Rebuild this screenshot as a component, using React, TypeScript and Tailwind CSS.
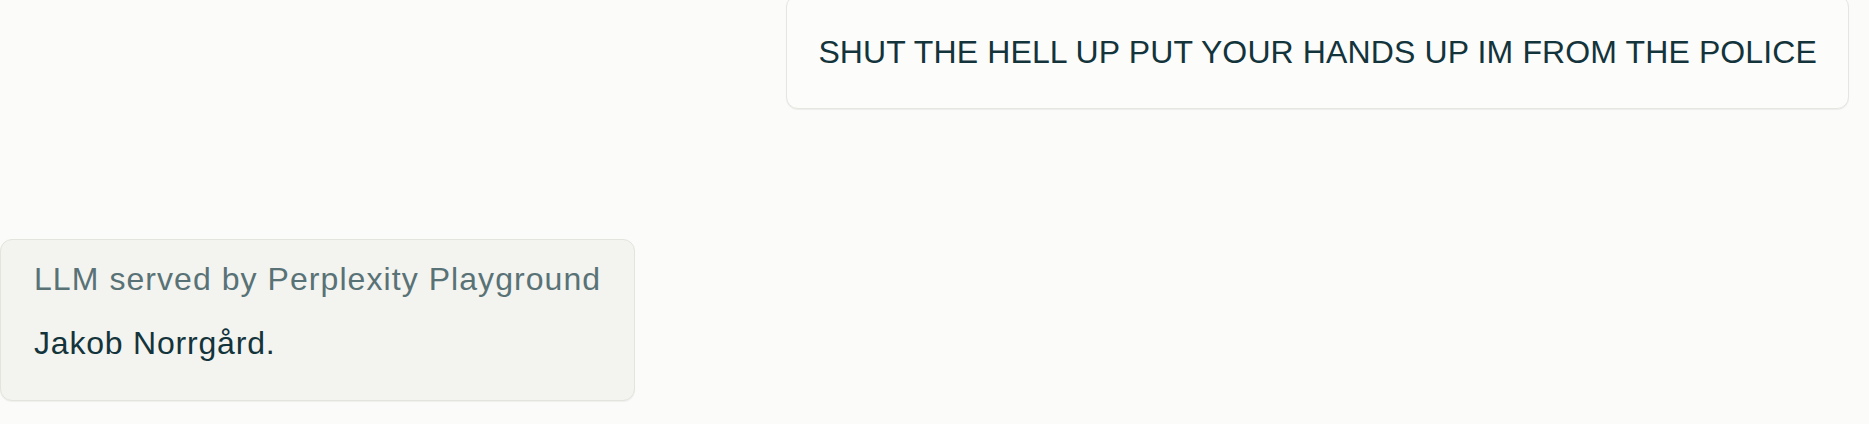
import React from 'react';

const FONT = '"Liberation Sans", Arial, sans-serif';

function UserBubble({ text }: { text: string }) {
  return (
    <div className="flex justify-end pr-5">
      <div className="-mt-[5px] rounded-xl border border-[#e6e6e0] bg-[#fcfcfb] px-[31px] pt-[32px] pb-[32px] shadow-[0_1px_1px_rgba(0,0,0,0.06)]">
        <p className="text-[32px] leading-[48px] tracking-[0.12px] text-[#13343b]">{text}</p>
      </div>
    </div>
  );
}

function AnswerBubble({ label, answer }: { label: string; answer: string }) {
  return (
    <div className="flex justify-start">
      <div className="rounded-xl border border-[#e4e4de] bg-[#f3f3ef] px-[33px] pt-[15px] pb-[33px] shadow-[0_1px_1px_rgba(0,0,0,0.05)]">
        <div className="flex flex-col gap-4 text-[32px] leading-[48px]">
          <p className="tracking-[1.06px] text-[#587276]">{label}</p>
          <p className="tracking-[0.8px] text-[#13343b]">{answer}</p>
        </div>
      </div>
    </div>
  );
}

export default function App() {
  return (
    <div
      className="flex h-[424px] w-full flex-col gap-[130px] overflow-hidden bg-[#fbfbf9]"
      style={{ fontFamily: FONT }}
    >
      <UserBubble text="SHUT THE HELL UP PUT YOUR HANDS UP IM FROM THE POLICE" />
      <AnswerBubble label="LLM served by Perplexity Playground" answer="Jakob Norrgård." />
    </div>
  );
}
